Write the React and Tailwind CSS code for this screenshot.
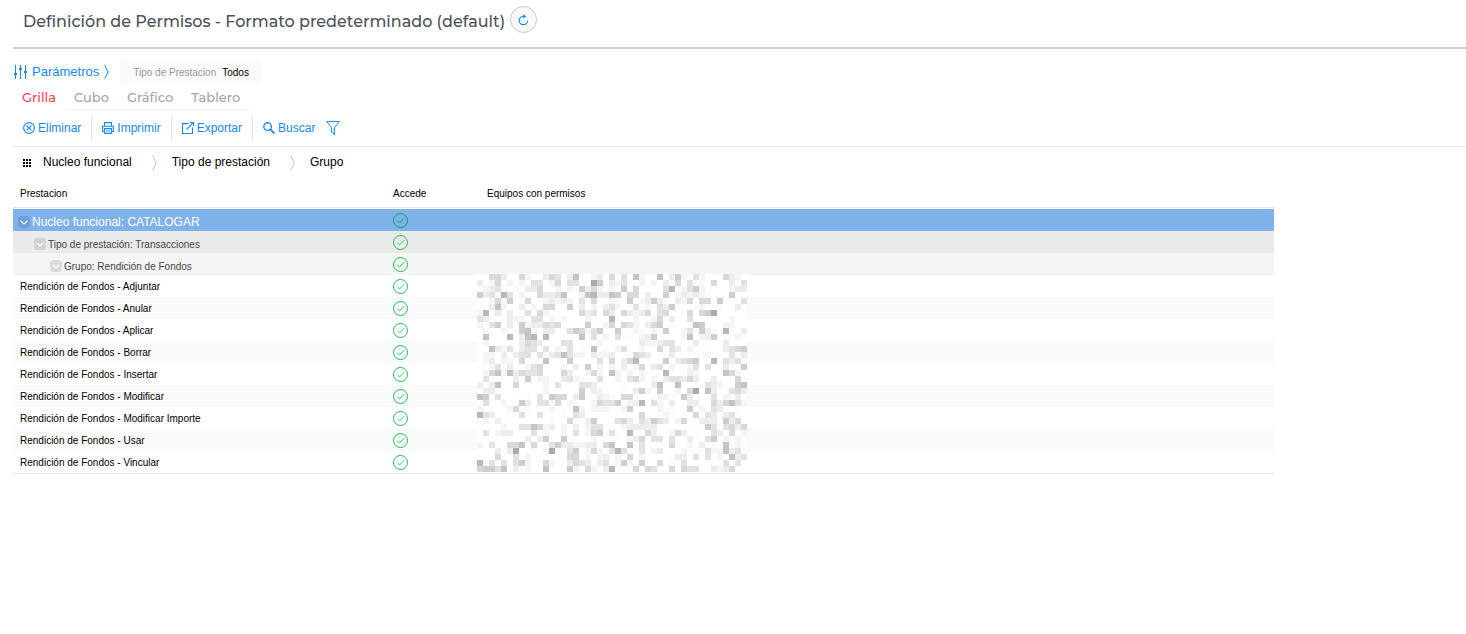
import React, { useState } from "react";

const tabs = ["Grilla", "Cubo", "Gráfico", "Tablero"];

const groupings = ["Nucleo funcional", "Tipo de prestación", "Grupo"];

const permisos = [
  "Adjuntar",
  "Anular",
  "Aplicar",
  "Borrar",
  "Insertar",
  "Modificar",
  "Modificar Importe",
  "Usar",
  "Vincular",
];

const groups = [
  {
    label: "Nucleo funcional: CATALOGAR",
    row: "h-[23px] bg-[#7fb2e9]",
    border: "border-t border-white",
    cell: "pl-[5px] text-xs text-white",
    toggle: "bg-[#6c9fd8]",
    check: "#0f9d6b",
  },
  {
    label: "Tipo de prestación: Transacciones",
    row: "h-[22px] bg-[#eaeaea]",
    cell: "pl-[21px] text-[10px] text-[#444444]",
    toggle: "bg-[#d3d3d3]",
  },
  {
    label: "Grupo: Rendición de Fondos",
    row: "h-[22px] bg-[#f5f5f5]",
    cell: "pl-[37px] text-[10px] text-[#444444]",
    toggle: "bg-[#dcdcdc]",
  },
];

// Pixelated team names, one digit per block (0 = white, 9 = darkest)
const mosaic = [
  "005530052003540370023050407200703620420005320",
  "302502020440250441096032400202030504010500304",
  "023410103350020206352020605000048024620000233",
  "634184020053347002783376055030060232321000600",
  "102516015012323204050020060236300325055060004",
  "013720030205500603020342004020436000020110031",
  "280303004052000005340530532350450015056900000",
  "431003220440202000210080002002503004000000200",
  "214603062335450000600250542035601000760002200",
  "020020067203300465246006002102060024063108003",
  "071008037808000007140204110236000027023601020",
  "020000035430004400002000000322344000300003000",
  "007324034404021401070102400200504302010003456",
  "022030344040347422032230005430003000012000403",
  "023022050007000600004050358000060345600804341",
  "012413002450002030602020302503402002404003106",
  "025727354450005300252072020200080003200007520",
  "040000306022103421004002045202034435300300050",
  "303700500002040004430000101003700700004320067",
  "033000100002000006032100003620600205907300453",
  "760400011040655036003210551001221063000402130",
  "040020063044250200025446023804203003300535742",
  "200002511010200072022200260000211006020431010",
  "843001040040001043000000000500020010504303400",
  "020300000000100500360004530436430250033306350",
  "100020044752302030244100233333000000006404535",
  "040233000402002040256041080053012530100430502",
  "000010003036006100020000023504404003004602021",
  "204005570500463322330570070410005002030007020",
  "000313900102900460252048400402300020004227341",
  "000500402000000550202302050200000330404020734",
  "804040462015200354303402620600501140000004040",
  "566470302007001620520380105054015054400323500",
];

const shades = ["#ffffff", "#fcfcfc", "#f5f5f5", "#ededed", "#e2e2e2", "#d9d9d9", "#cecece", "#c4c4c4", "#b8b8b8", "#a9a9a9"];

const Mosaic = () => (
  <svg
    className="absolute -top-px left-0 z-10"
    width="270"
    height="198"
    viewBox="0 0 270 198"
    shapeRendering="crispEdges"
    aria-hidden="true"
  >
    <rect width="270" height="198" fill="#ffffff" />
    {mosaic.map((line, y) =>
      line.split("").map((level, x) =>
        level === "0" ? null : (
          <rect key={`${x}-${y}`} x={x * 6} y={y * 6} width="6" height="6" fill={shades[level]} />
        )
      )
    )}
  </svg>
);

const CheckCircle = ({ color = "#1fbf55" }) => (
  <svg className="block" width="15" height="15" viewBox="0 0 15 15" fill="none" stroke={color} role="img" aria-label="Sí">
    <circle cx="7.5" cy="7.5" r="7" />
    <path d="M4.4 7.8l2.2 2.1 4.6-4.7" strokeWidth="0.9" />
  </svg>
);

const RefreshIcon = () => (
  <svg width="11" height="12" viewBox="0 0 11 12" fill="none" stroke="currentColor" strokeWidth="1.2">
    <path d="M6 2.3H5.2A4.2 4.2 0 1 0 9.6 6.6" />
    <path d="M5.4 0.2L8.2 2.4 5.4 4.6z" fill="currentColor" stroke="none" />
  </svg>
);

const SlidersIcon = () => (
  <svg width="13" height="14" viewBox="0 0 13 14" fill="none" stroke="currentColor">
    <path d="M1.5 0v14M6.5 0v14M11.5 0v14" />
    <path d="M0 9h3M5 4h3M10 7h3" strokeWidth="2" />
  </svg>
);

const ChevronIcon = ({ className, height = 14 }) => (
  <svg className={className} width="5" height={height} viewBox="0 0 5 14" preserveAspectRatio="none" fill="none" stroke="currentColor">
    <path d="M0.7 0.3L4.2 7 0.7 13.7" vectorEffect="non-scaling-stroke" />
  </svg>
);

const DeleteIcon = () => (
  <svg width="12" height="12" viewBox="0 0 12 12" fill="none" stroke="currentColor" strokeWidth="1.1">
    <circle cx="6" cy="6" r="5.4" />
    <path d="M3.6 3.6l4.8 4.8M8.4 3.6L3.6 8.4" />
  </svg>
);

const PrintIcon = () => (
  <svg width="12" height="12" viewBox="0 0 12 12" fill="none" stroke="currentColor" strokeWidth="1.1">
    <path d="M2.5 4V0.6h7V4" />
    <path d="M2.5 9.5H0.6V4.2h10.8v5.3H9.5" />
    <path d="M2.6 6.6h6.8v4.8H2.6zM4 9h4" />
  </svg>
);

const ExportIcon = () => (
  <svg width="12" height="12" viewBox="0 0 12 12" fill="none" stroke="currentColor" strokeWidth="1.1">
    <path d="M6.5 1.6h-6v9.9h10v-6" />
    <path d="M4.4 7.6l7-7.1M7.8 0.5h3.7v3.8" />
  </svg>
);

const SearchIcon = () => (
  <svg width="12" height="12" viewBox="0 0 12 12" fill="none" stroke="currentColor">
    <circle cx="4.6" cy="4.6" r="3.8" strokeWidth="1.4" />
    <path d="M7.4 7.4l4 4" strokeWidth="1.8" />
  </svg>
);

const FilterIcon = () => (
  <svg width="14" height="15" viewBox="0 0 14 15" fill="none" stroke="currentColor">
    <path d="M0.7 0.6h12.6L8.6 6.4v7.3L5.4 11.4v-5z" />
    <path d="M7.5 6.5v6" strokeWidth="1.6" strokeOpacity="0.3" />
  </svg>
);

const GridDots = () => (
  <svg width="8" height="8" viewBox="0 0 8 8" shapeRendering="crispEdges" aria-hidden="true">
    {[0, 3, 6].map((y) => [0, 3, 6].map((x) => <rect key={`${x}-${y}`} x={x} y={y} width="2" height="2" />))}
  </svg>
);

const actions = [
  { label: "Eliminar", Icon: DeleteIcon },
  { label: "Imprimir", Icon: PrintIcon },
  { label: "Exportar", Icon: ExportIcon },
];

const App = () => {
  const [activeTab, setActiveTab] = useState("Grilla");

  return (
    <div className="pl-[13px] bg-white text-black font-['Liberation_Sans',Arial,sans-serif]">
      {/* Page Header */}
      <header className="flex items-center h-[49px] pl-[10px] pb-2 border-b-2 border-[#d0d0d3]">
        <h1 className="pt-1 font-['Montserrat','Inter',sans-serif] text-base font-medium text-[#4c505a]">
          Definición de Permisos - Formato predeterminado (default)
        </h1>
        <button
          type="button"
          aria-label="Actualizar"
          className="flex items-center justify-center ml-[5px] size-[27px] rounded-full border border-[#c9c9cc] bg-[#f8f8f8] text-[#1789f5]"
        >
          <RefreshIcon />
        </button>
      </header>

      {/* Parameters */}
      <div className="flex items-center mt-[11px] h-6">
        <button type="button" className="flex items-center pl-px text-[13px] leading-4 text-[#1789f5]">
          <SlidersIcon />
          <span className="ml-[5px]">Parámetros</span>
          <ChevronIcon className="ml-[5px]" />
        </button>
        <div className="flex items-center ml-[11px] h-6 px-[13px] rounded-sm bg-[#fafafa] text-[10px]">
          <span className="text-[#999999]">Tipo de Prestacion</span>
          <span className="ml-1.5">Todos</span>
        </div>
      </div>

      {/* Tabs */}
      <div role="tablist" className="flex h-[27px] font-['Montserrat','Inter',sans-serif] text-[13px] font-medium">
        {tabs.map((tab) => (
          <button
            key={tab}
            type="button"
            role="tab"
            aria-selected={activeTab === tab}
            onClick={() => setActiveTab(tab)}
            className={`px-[9px] pt-[3px] border-b-[3px] ${
              activeTab === tab ? "border-transparent text-[#ff3f55]" : "border-[#f8f8f8] text-[#a5a5a5]"
            }`}
          >
            {tab}
          </button>
        ))}
      </div>

      {/* Toolbar */}
      <div className="flex items-center h-9 border-b border-[#e8e8e8] text-xs text-[#1789f5]">
        {actions.map(({ label, Icon }) => (
          <button key={label} type="button" className="flex items-center gap-[3px] h-6 px-[10px] pb-0.5 border-r border-[#e3e3e3]">
            <Icon />
            {label}
          </button>
        ))}
        <button type="button" className="flex items-center gap-[3px] h-6 pl-[10px] pr-[11px] pb-0.5">
          <SearchIcon />
          Buscar
        </button>
        <button type="button" aria-label="Filtrar">
          <FilterIcon />
        </button>
      </div>

      {/* Grouping */}
      <div className="flex items-center h-[31px] pl-[10px] text-xs">
        <GridDots />
        <ul className="flex items-center ml-3">
          {groupings.map((name, i) => (
            <li key={name} className="flex items-center">
              {i > 0 && <ChevronIcon className="ml-5 mr-[15px] text-[#c4c4c4]" height={16} />}
              <span className="pb-0.5">{name}</span>
            </li>
          ))}
        </ul>
      </div>

      {/* Grid */}
      <div className="mr-48 border-b border-[#e3e3e3]">
        <table className="w-full table-fixed border-separate border-spacing-0 text-left text-[10px]">
          <colgroup>
            <col className="w-[373px]" />
            <col className="w-[91px]" />
            <col />
          </colgroup>
          <thead>
            <tr className="h-[30px]">
              <th className="p-0 pt-0.5 pl-[7px] font-normal border-b border-[#e3e3e3]">Prestacion</th>
              <th className="p-0 pt-0.5 pl-[7px] font-normal border-b border-[#e3e3e3]">Accede</th>
              <th className="p-0 pt-0.5 pl-[10px] font-normal border-b border-[#e3e3e3]">Equipos con permisos</th>
            </tr>
          </thead>
          <tbody>
            {groups.map((group) => (
              <tr key={group.label} className={group.row}>
                <td className={`p-0 ${group.cell} ${group.border || ""}`}>
                  <div className="flex items-center gap-[2px] pt-1">
                    <button
                      type="button"
                      aria-label="Contraer grupo"
                      className={`flex items-center justify-center size-3 rounded-sm text-white ${group.toggle}`}
                    >
                      <svg width="8" height="5" viewBox="0 0 8 5" fill="none" stroke="currentColor" strokeWidth="1.1">
                        <path d="M0.5 0.7L4 3.9 7.5 0.7" />
                      </svg>
                    </button>
                    <span className="leading-[15px]">{group.label}</span>
                  </div>
                </td>
                <td className={`p-0 pl-[7px] ${group.border || ""}`}>
                  <CheckCircle color={group.check} />
                </td>
                <td className={`p-0 ${group.border || ""}`} />
              </tr>
            ))}
            {permisos.map((name, i) => (
              <tr key={name} className="h-[22px] odd:bg-[#fafafa]">
                <td className="p-0 pl-[7px]">Rendición de Fondos - {name}</td>
                <td className="p-0 pl-[7px]">
                  <CheckCircle />
                </td>
                <td className="relative p-0">{i === 0 && <Mosaic />}</td>
              </tr>
            ))}
          </tbody>
        </table>
      </div>
    </div>
  );
};

export default App;
